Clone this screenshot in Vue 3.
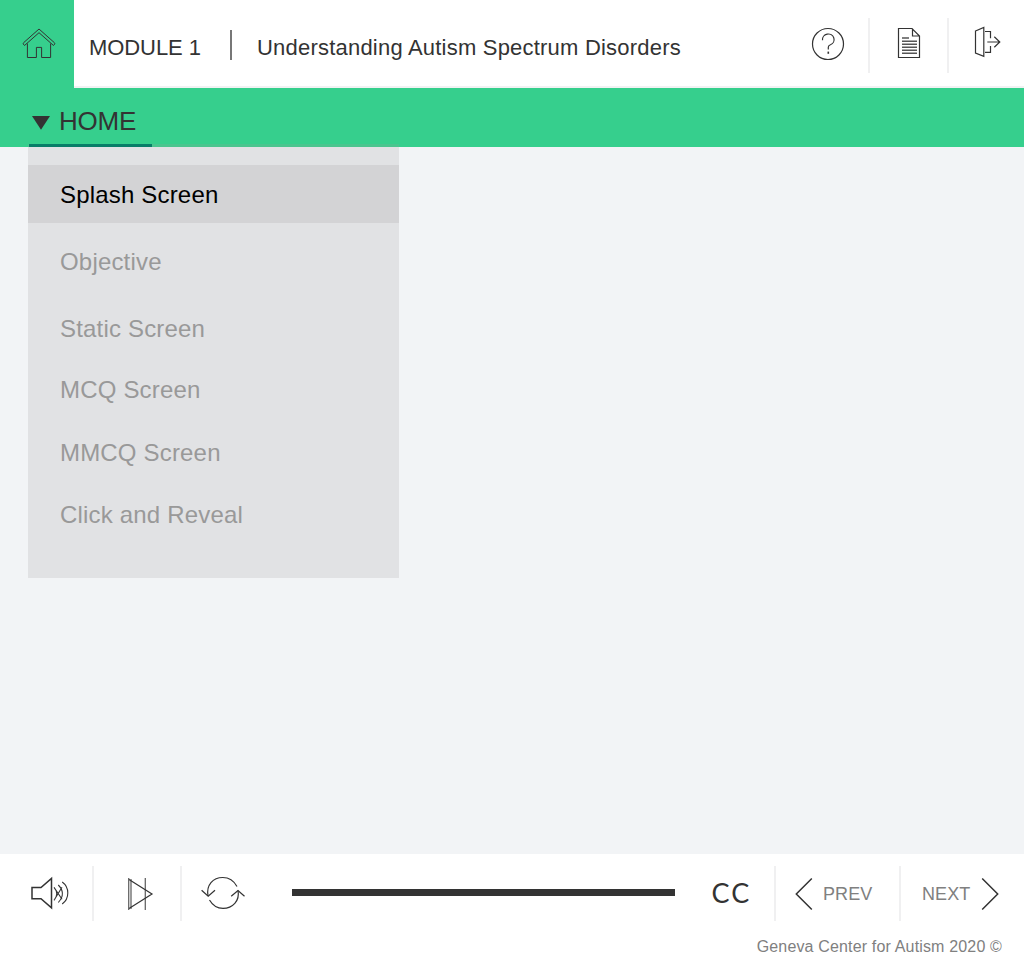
<script setup>
import { ref } from 'vue'

const items = [
  { label: 'Splash Screen', size: 'first' },
  { label: 'Objective', size: 'tall' },
  { label: 'Static Screen', size: 'mid' },
  { label: 'MCQ Screen', size: 'plain' },
  { label: 'MMCQ Screen', size: 'short' },
  { label: 'Click and Reveal', size: 'short' },
]
const active = ref(0)
</script>

<template>
  <div class="player">
    <header class="top">
      <div class="home-btn">
        <svg width="74" height="88" viewBox="0 0 74 88">
          <path d="M24.5 45.5 L23.3 44 Q23 43.3 23.6 42.7 L39 29 L54.4 42.7 Q55 43.3 54.7 44 L53.5 45.5 L39 32.7 Z" />
          <path d="M27.4 43.5 V57.5 H36.4 V47.4 H41.6 V57.5 H50.6 V43.5" />
        </svg>
      </div>
      <div class="heading">
        <span class="module">MODULE 1</span>
        <span class="bar"></span>
        <span class="title">Understanding Autism Spectrum Disorders</span>
      </div>
      <div class="tools">
        <div class="tool help">
          <svg width="80" height="88" viewBox="788 0 80 88">
            <circle cx="828" cy="44" r="15.5" />
            <path d="M822.5 40.2 A5.8 5.6 0 1 1 830.4 44.8 Q828.3 45.5 828.3 47.3 V49.6" />
            <path d="M828.3 51.6 V53.8" class="dot" />
          </svg>
        </div>
        <div class="tool doc">
          <svg width="77" height="88" viewBox="870 0 77 88">
            <path d="M898.5 28.5 H912 L919.5 36 V57.5 H898.5 Z M912.5 28.5 V36 H919.5" />
            <path class="lines" d="M902 38 H909 M902 41.2 H917 M902 44.2 H917 M902 47.2 H917 M902 50.2 H917 M902 53.2 H917" />
          </svg>
        </div>
        <div class="tool exit">
          <svg width="75" height="88" viewBox="949 0 75 88">
            <path d="M975.5 31 L983.8 27.5 V56.4 L975.5 53 Z" />
            <path d="M985 31.5 H990.5 V38.3 M990.5 46 V52.3 H985 M987.3 42 H999.8 M994.3 36.7 L999.8 42 L994.3 47.3" />
          </svg>
        </div>
      </div>
    </header>

    <nav class="crumbs">
      <div class="tab">
        <svg width="18" height="14" viewBox="0 0 18 14"><path d="M0 0 H18 L9 13.8 Z" /></svg>
        <span>HOME</span>
      </div>
    </nav>

    <main class="stage">
      <ul class="menu">
        <li
          v-for="(item, i) in items"
          :key="item.label"
          :class="[item.size, { active: active === i }]"
          @click="active = i"
        >{{ item.label }}</li>
      </ul>
    </main>

    <footer class="bottom">
      <div class="controls">
        <div class="cell sound">
          <svg width="92" height="55" viewBox="0 866 92 55">
            <path class="strong" d="M32 887.5 H41 L51.5 878.4 V907.8 L41 898.7 H32 Z" />
            <path class="wave" d="M54 887.3 Q59.5 893.5 54 900.3 M58.3 885 Q66.5 893.5 58.3 902.5 M62.2 882 Q67.8 886 67.8 893 Q67.8 900 62.2 904 M54.5 888 L62 899.3 M62 887.3 L54.5 899.5" />
          </svg>
        </div>
        <div class="cell play">
          <svg width="86" height="55" viewBox="94 866 86 55">
            <path class="stem" d="M128.7 878 V910 M131 879 V909 M145.3 878 V910" />
            <path d="M129 879.5 L152 894 L129 908.5" />
          </svg>
        </div>
        <div class="cell reload">
          <svg width="90" height="55" viewBox="182 866 90 55">
            <path d="M208 896 C206 885 213 877.5 222.8 877.5 C229 877.5 234 881 237 886.5" />
            <path d="M209.5 900 C213 906 218 908.4 223 908.4 C232.5 908.4 240 901 238 890.5" />
            <path d="M201.6 890.2 L208.2 896.3 L215 890.2 M231.2 896.3 L238 890.5 L244.5 896.3" />
          </svg>
        </div>
        <div class="progress"><div class="track"></div></div>
        <div class="cc"><span>CC</span></div>
        <div class="cell prev">
          <svg width="18" height="34" viewBox="0 0 18 34"><path d="M16.8 1.5 L1.3 17 L16.8 32.5" /></svg>
          <span>PREV</span>
        </div>
        <div class="cell next">
          <span>NEXT</span>
          <svg width="18" height="34" viewBox="0 0 18 34"><path d="M1.2 1.5 L16.7 17 L1.2 32.5" /></svg>
        </div>
      </div>
      <p class="copy">Geneva Center for Autism 2020 ©</p>
    </footer>
  </div>
</template>

<style>
body { margin: 0; background: #fff; }
</style>

<style scoped>
* { box-sizing: border-box; }
.player {
  width: 1024px;
  height: 960px;
  display: flex;
  flex-direction: column;
  overflow: hidden;
  background: #f2f4f6;
  color: #333;
  font-family: "Liberation Sans", Arial, sans-serif;
}
svg { display: block; flex: none; fill: none; stroke: #333; stroke-width: 1.2; }
.top { height: 88px; flex: none; display: flex; background: #fff; }
.home-btn { width: 74px; background: #36cf8d; }
.home-btn svg { stroke-width: 1; }
.heading {
  flex: 1;
  display: flex;
  align-items: center;
  padding: 9px 0 0 15px;
  border-bottom: 2px solid #f1f2f3;
  font-size: 22px;
  line-height: 26px;
  white-space: nowrap;
}
.module { width: 141px; letter-spacing: -0.08px; }
.bar { width: 2px; height: 30px; margin: -6px 25px 0 0; background: #777; }
.title { letter-spacing: 0.21px; }
.tools { display: flex; border-bottom: 2px solid #f1f2f3; height: 88px; }
.tool { height: 86px; overflow: hidden; }
.tool + .tool { padding-left: 2px; background: linear-gradient(#f0f0f1, #f0f0f1) 0 18px / 2px 55px no-repeat; }
.tool .dot { stroke-width: 1.6; }
.tool .lines { stroke-width: 1.4; stroke: #555; }
.crumbs { height: 59px; flex: none; padding-left: 29px; background: #36cf8d; }
.tab {
  position: relative;
  z-index: 1;
  width: 123px;
  height: 59px;
  display: flex;
  align-items: center;
  padding: 9px 0 0 3px;
  border-bottom: 3px solid #087d68;
  font-size: 26px;
  line-height: 30px;
  letter-spacing: -0.2px;
}
.tab svg { fill: #333; stroke: none; margin: 4px 9px 0 0; }
.stage { flex: 1; padding-left: 28px; }
.menu {
  position: relative;
  width: 371px;
  height: 434px;
  margin: -3px 0 0;
  padding: 21px 0 0;
  list-style: none;
  background: linear-gradient(#4ac58e 0 3px, #e1e2e4 3px);
  font-size: 24px;
  letter-spacing: 0.18px;
  color: #999;
}
.menu li { padding-left: 32px; height: 62px; line-height: 62px; }
.menu li.first { height: 58px; line-height: 59px; }
.menu li.tall { height: 76px; line-height: 77px; }
.menu li.mid { height: 60px; line-height: 59px; }
.menu li.plain { height: 63px; }
.menu li.active { background: #d3d3d5; color: #000; }
.bottom { height: 106px; flex: none; padding-top: 12px; background: #fff; }
.controls { display: flex; height: 55px; }
.cell { display: flex; align-items: center; }
.sound, .play { border-right: 2px solid #f0f0f1; box-sizing: content-box; }
.strong { stroke-width: 1.5; }
.wave { stroke-width: 1.1; }
.stem { stroke: #666; stroke-width: 1.3; }
.progress { width: 403px; padding: 23px 0 0 20px; }
.track { width: 383px; height: 7px; background: #333; }
.cc {
  width: 99px;
  padding-left: 36.5px;
  font-family: Lato, sans-serif;
  font-size: 27px;
  line-height: 53px;
  letter-spacing: 2px;
}
.cc span { display: inline-block; }
.prev, .next {
  border-left: 2px solid #f0f0f1;
  font-size: 18px;
  letter-spacing: 0.1px;
  color: #808080;
}
.cell span { padding-top: 2px; }
.prev { width: 125px; padding-left: 19px; }
.prev span { margin-left: 10px; }
.next { width: 125px; padding-left: 21px; }
.next svg { margin-left: 11px; }
.prev svg, .next svg { stroke-width: 1.5; }
.copy {
  margin: 16px 22px 0 0;
  text-align: right;
  font-size: 16px;
  line-height: 20px;
  letter-spacing: 0.16px;
  color: #808080;
}
</style>
